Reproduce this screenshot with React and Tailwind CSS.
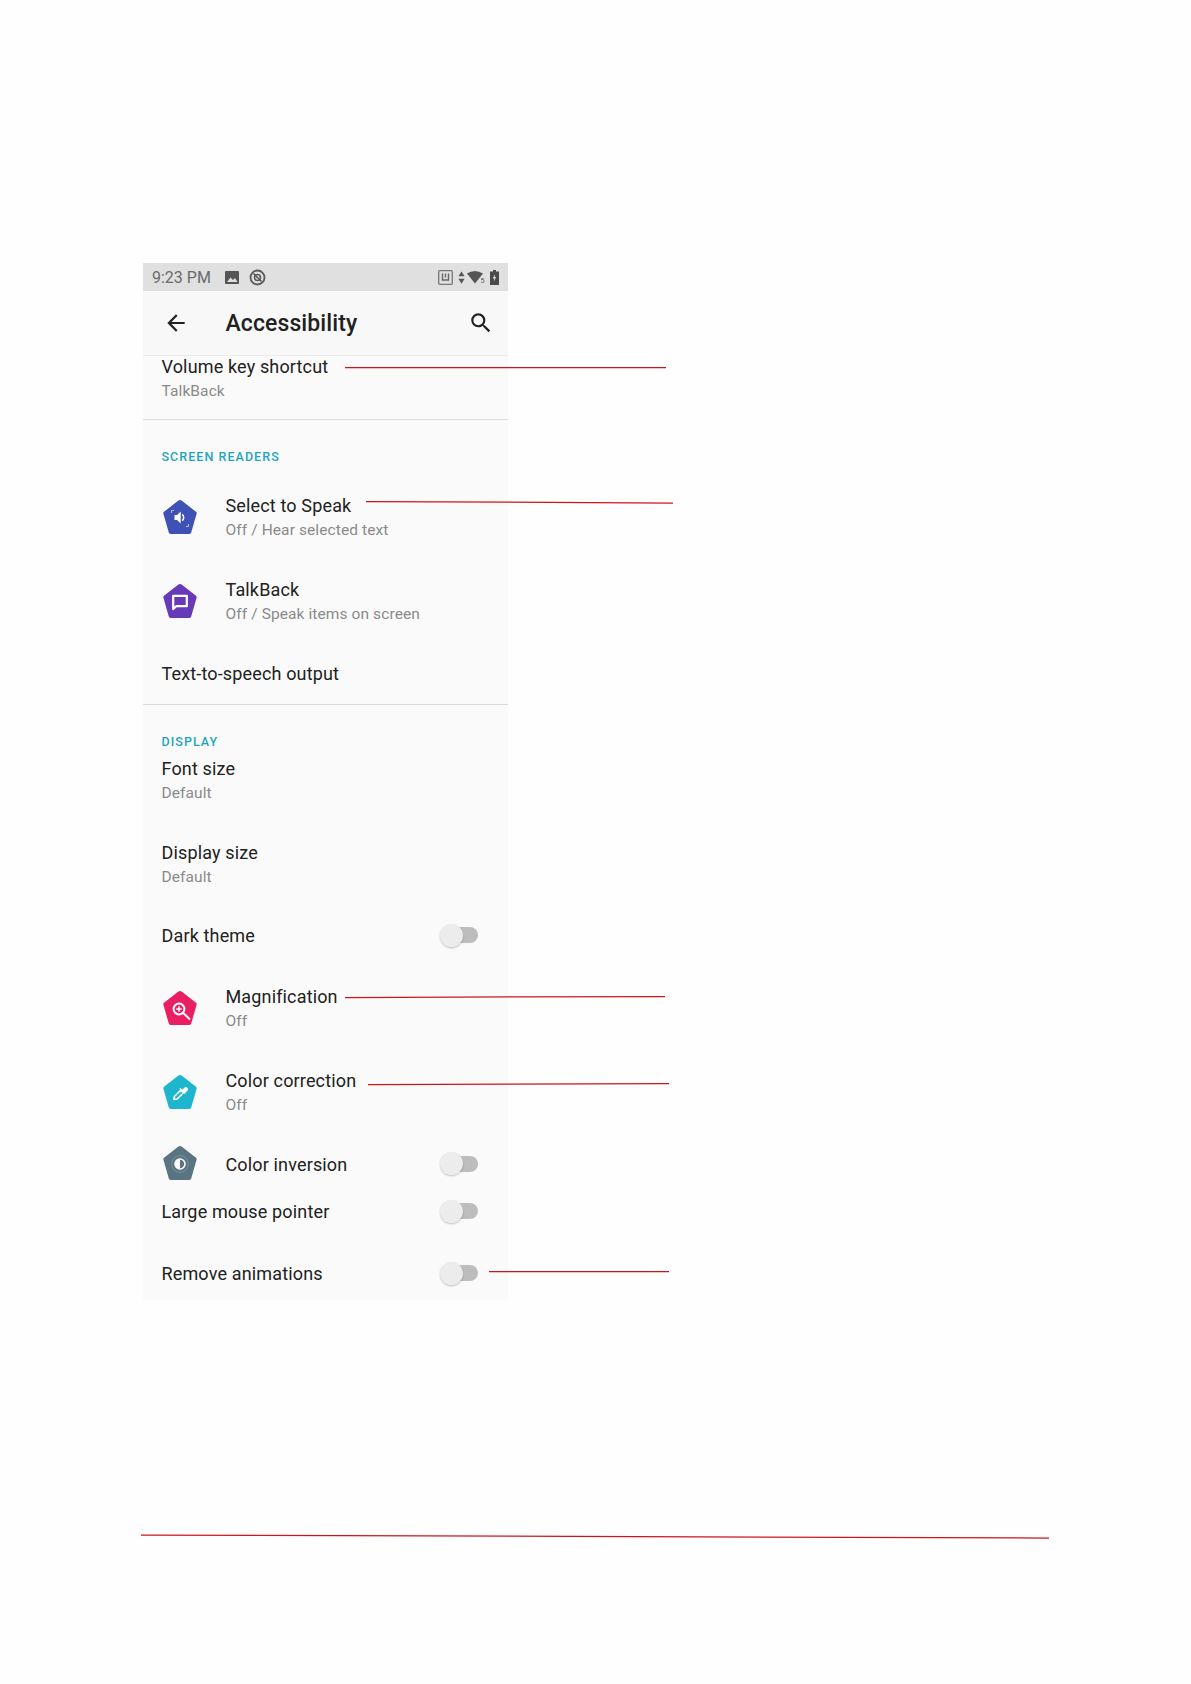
import React from "react";

const PENT = "M17 0 Q17.9 0 18.6 0.6 L33 11.8 Q34 12.6 33.6 13.8 L28.2 32.6 Q27.8 34 26.4 34 L7.6 34 Q6.2 34 5.8 32.6 L0.4 13.8 Q0 12.6 1 11.8 L15.4 0.6 Q16.1 0 17 0 Z";

function Pent({ color, children }) {
  return (
    <svg width="34" height="34" viewBox="0 0 34 34" className="block shrink-0 mb-[3px]">
      <path d={PENT} fill={color} />
      {children}
    </svg>
  );
}

const SpeakIcon = () => (
  <Pent color="#3f51b5">
    <path d="M11.5 15 h2.6 l3.6 -3.6 v12.2 l-3.6 -3.6 h-2.6 z" fill="#fff" />
    <path d="M19.2 14.4 a4 4 0 0 1 0 6.2" stroke="#fff" strokeWidth="1.5" fill="none" />
    <path d="M8.5 13 v-2.5 h2.5 M25.5 24 v2.5 h-2.5" stroke="#b9c1ea" strokeWidth="1" fill="none" />
  </Pent>
);
const TalkIcon = () => (
  <Pent color="#673ab7">
    <path d="M10.2 11.8 h13.6 v10.4 h-10.6 l-3 2.8 z" fill="none" stroke="#fff" strokeWidth="2.2" strokeLinejoin="round" />
  </Pent>
);
const MagIcon = () => (
  <Pent color="#e91e63">
    <circle cx="16" cy="18" r="5.4" fill="none" stroke="#fff" strokeWidth="2" />
    <path d="M16 15.3 v5.4 M13.3 18 h5.4" stroke="#fff" strokeWidth="1.4" />
    <path d="M20.2 22 l6.8 6.4" stroke="#fff" strokeWidth="2" />
  </Pent>
);
const DropIcon = () => (
  <Pent color="#1eb6cf">
    <path d="M10.8 24.5 l0.6 -3 l6.4 -6.4 l2.6 2.6 l-6.4 6.4 z" fill="none" stroke="#fff" strokeWidth="1.5" strokeLinejoin="round" />
    <path d="M17 13.5 l5 5 M19.6 15.5 l2.4 -2.4 a1.5 1.5 0 0 1 2 2 l-2.4 2.4" fill="#fff" stroke="#fff" strokeWidth="1.6" />
  </Pent>
);
const InvertIcon = () => (
  <Pent color="#5a7581">
    <circle cx="17" cy="18" r="5" fill="#5a7581" stroke="#fff" strokeWidth="1.6" />
    <path d="M17 13 a5 5 0 0 1 0 10 z" fill="#fff" transform="rotate(180 17 18)" />
    <circle cx="17" cy="18" r="8.4" fill="none" stroke="#7d949e" strokeWidth="0.8" />
  </Pent>
);

function Toggle() {
  return (
    <div className="relative w-[38px] h-[23px] shrink-0 mb-[2px]">
      <div className="absolute right-0 top-[3.5px] w-[31px] h-[16px] rounded-full bg-[#bdbdbd]" />
      <div className="absolute left-0 top-0 w-[23px] h-[23px] rounded-full bg-[#ececec] shadow-[0_1px_2px_rgba(0,0,0,0.22)]" />
    </div>
  );
}

function Text({ title, sub }) {
  return (
    <div className="min-w-0">
      <div className="text-[18px] leading-[24px] text-[#212121] tracking-[0.15px] whitespace-nowrap">{title}</div>
      {sub && <div className="text-[15.5px] leading-[24px] text-[#8a8a8a] tracking-[0.1px] whitespace-nowrap">{sub}</div>}
    </div>
  );
}

function Row({ h, icon, title, sub, toggle, extra = "" }) {
  return (
    <div className={`flex items-center pl-[18.5px] pr-[30px] ${h} ${extra}`}>
      {icon && <div className="w-[64px] shrink-0 pl-[1.5px]">{icon}</div>}
      <div className="flex-1">
        <Text title={title} sub={sub} />
      </div>
      {toggle && <Toggle />}
    </div>
  );
}

function Header({ children, extra }) {
  return (
    <div className={`pl-[18.5px] text-[12.5px] font-medium tracking-[1.05px] leading-[16px] text-[#1ea5bd] ${extra}`}>
      {children}
    </div>
  );
}

export default function App() {
  return (
    <div className="relative min-h-[1684px] bg-[#fefefe] pt-[263px] pl-[143px] font-['Roboto',sans-serif]">
      <div className="w-[365px] bg-[#fafafa]">
        <div className="h-[28px] bg-[#e0e0e0] flex items-center pl-[9px] pr-[9px] text-[#6a6a6a]">
          <span className="text-[16px] leading-none pt-[2px]">9:23 PM</span>
          <svg width="14" height="13" viewBox="0 0 14 13" className="ml-[14px]">
            <rect width="14" height="13" rx="1" fill="#555" />
            <path d="M2 11 L5.5 6.5 L8 9 L10 7 L12.5 11 Z" fill="#e0e0e0" />
          </svg>
          <svg width="17" height="17" viewBox="0 0 17 17" className="ml-[10px]">
            <circle cx="8.5" cy="8.5" r="7" fill="none" stroke="#5a5a5a" strokeWidth="1.8" />
            <circle cx="8.5" cy="8.5" r="3" fill="none" stroke="#5a5a5a" strokeWidth="1.6" />
            <path d="M4.5 4.5 L12.5 12.5" stroke="#5a5a5a" strokeWidth="1.6" />
          </svg>
          <div className="flex-1" />
          <svg width="15" height="15" viewBox="0 0 15 15">
            <rect x="0.7" y="0.7" width="13.6" height="13.6" rx="1" fill="none" stroke="#777" strokeWidth="1.3" />
            <path d="M4.5 3.5 v6.5 h6 v-6.5" fill="none" stroke="#666" strokeWidth="1.4" />
            <path d="M7.5 3.5 v4" stroke="#666" strokeWidth="1.4" />
          </svg>
          <svg width="7" height="13" viewBox="0 0 8 14" className="ml-[5px]">
            <path d="M4 0 L7.5 5.5 H0.5 Z M4 14 L7.5 8.5 H0.5 Z" fill="#555" />
          </svg>
          <svg width="19" height="14" viewBox="0 0 19 14" className="ml-[2px]">
            <path d="M0 3.5 Q8 -1.5 16 3.5 L8 13.5 Z" fill="#555" />
            <text x="13.5" y="13" fontSize="7" fill="#555" fontFamily="Roboto, sans-serif">5</text>
          </svg>
          <svg width="9" height="15" viewBox="0 0 9 15" className="ml-[4px]">
            <path d="M3 0 h3 v1.5 h3 v13.5 h-9 v-13.5 h3 z" fill="#4a4a4a" />
            <path d="M5 4 L2.8 8.5 H4.3 L3.8 11.5 L6.2 7 H4.7 Z" fill="#e0e0e0" />
          </svg>
        </div>

        <div className="h-[65px] bg-[#f8f8f8] border-b border-[#ececec] flex items-center pl-[19.5px] pr-[14.5px]">
          <svg width="26" height="26" viewBox="0 0 24 24" className="shrink-0">
            <path d="M20 11H7.83l5.59-5.59L12 4l-8 8 8 8 1.41-1.41L7.83 13H20v-2z" fill="#212121" />
          </svg>
          <div className="ml-[37px] flex-1 text-[23px] leading-none text-[#212121] tracking-[0.1px] pt-[1px]" style={{ fontWeight: 500 }}>Accessibility</div>
          <svg width="26" height="26" viewBox="0 0 24 24" className="shrink-0">
            <path d="M15.5 14h-.79l-.28-.27A6.47 6.47 0 0 0 16 9.5 6.5 6.5 0 1 0 9.5 16c1.61 0 3.09-.59 4.23-1.57l.27.28v.79l5 4.99L20.49 19l-4.99-5zm-6 0C7.01 14 5 11.99 5 9.5S7.01 5 9.5 5 14 7.01 14 9.5 11.99 14 9.5 14z" fill="#212121" />
          </svg>
        </div>

        <div className="h-[65px] -mt-[1px] border-b border-[#dcdcdc] pl-[18.5px]">
          <Text title="Volume key shortcut" sub="TalkBack" />
        </div>

        <Header extra="pt-[29px] pb-[11px]">SCREEN READERS</Header>
        <Row h="h-[84px]" icon={<SpeakIcon />} title="Select to Speak" sub="Off / Hear selected text" />
        <Row h="h-[84px]" icon={<TalkIcon />} title="TalkBack" sub="Off / Speak items on screen" />
        <Row h="h-[61px]" title="Text-to-speech output" extra="border-b border-[#dcdcdc]" />

        <Header extra="pt-[29px] pb-[1px]">DISPLAY</Header>
        <Row h="h-[60px]" title="Font size" sub="Default" />
        <Row h="h-[60px]" title="Display size" sub="Default" extra="mt-[24px]" />
        <Row h="h-[60px]" title="Dark theme" toggle extra="mt-[12px] pb-[2px]" />
        <Row h="h-[84px]" icon={<MagIcon />} title="Magnification" sub="Off" />
        <Row h="h-[84px]" icon={<DropIcon />} title="Color correction" sub="Off" />
        <Row h="h-[55px]" icon={<InvertIcon />} title="Color inversion" toggle extra="pt-[4px]" />
        <Row h="h-[44px]" title="Large mouse pointer" toggle />
        <Row h="h-[52px]" title="Remove animations" toggle extra="mt-[14px]" />
      </div>

      <svg className="absolute left-0 top-0 pointer-events-none" width="1191" height="1684" viewBox="0 0 1191 1684">
        <g stroke="#d0141c" strokeWidth="1.25" fill="none">
          <path d="M345 367.5 H666" />
          <path d="M366 501.5 L673 503" />
          <path d="M345 997.5 L665 996.5" />
          <path d="M368 1084.5 L669 1083.5" />
          <path d="M489 1271.5 H669" />
          <path d="M141 1535 L1049 1538" />
        </g>
      </svg>
    </div>
  );
}
